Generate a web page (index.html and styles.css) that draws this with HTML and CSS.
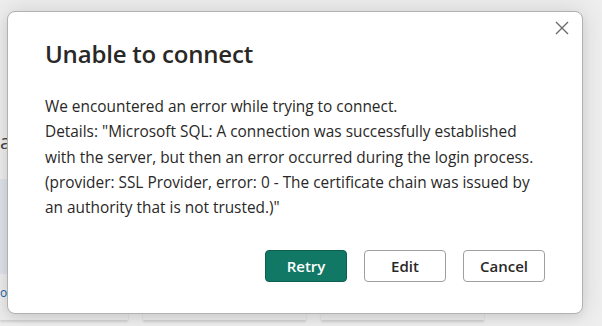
FILE: index.html
```
<!DOCTYPE html>
<html lang="en">
<head>
    <meta charset="UTF-8">
    <meta name="viewport" content="width=device-width, initial-scale=1.0">
    <title>Unable to connect</title>
    <link rel="stylesheet" href="styles.css">
</head>
<body>
<div class="backdrop">
    <div class="page">
        <div class="page-label">a</div>
        <div class="page-panel"></div>
        <div class="page-link">or</div>
        <div class="page-cards">
            <div class="page-card card-a"></div>
            <div class="page-card card-b"></div>
            <div class="page-card card-c"></div>
        </div>
    </div>

    <div class="dialog" role="dialog" aria-labelledby="dialogTitle">
        <button class="close-btn" type="button" aria-label="Close">
            <svg width="14" height="14" viewBox="0 0 14 14">
                <path d="M1 1 L13 13 M13 1 L1 13" stroke="#6b6b6b" stroke-width="1.4" fill="none"/>
            </svg>
        </button>

        <h1 id="dialogTitle">Unable to connect</h1>

        <div class="dialog-body">
            <p>We encountered an error while trying to connect.</p>
            <p>Details: "Microsoft SQL: A connection was successfully established with the server, but then an error occurred during the login process. (provider: SSL Provider, error: 0 - The certificate chain was issued by an authority that is not trusted.)"</p>
        </div>

        <div class="dialog-actions">
            <button type="button" class="btn btn-primary">Retry</button>
            <button type="button" class="btn">Edit</button>
            <button type="button" class="btn">Cancel</button>
        </div>
    </div>
</div>
</body>
</html>
```

FILE: styles.css
```
:root {
    --text-primary: #292827;
    --brand: #117865;
    --overlay: #eeeeee;
    --border: #b3b0ad;
}

* {
    margin: 0;
    padding: 0;
    box-sizing: border-box;
}

body {
    font-family: 'Open Sans', 'Noto Sans', 'Liberation Sans', sans-serif;
    background: var(--overlay);
    color: var(--text-primary);
}

.backdrop {
    position: relative;
    width: 602px;
    height: 326px;
    overflow: hidden;
}

/* page behind the dialog, dimmed */
.page {
    display: flex;
    flex-direction: column;
    height: 100%;
    padding-top: 128px;
}

.page-label {
    font-size: 20px;
    color: #444;
    height: 30px;
}

.page-panel {
    margin-top: 22px;
    width: 120px;
    height: 100px;
    background: #dfe3ea;
}

.page-link {
    margin-top: 10px;
    font-size: 12px;
    color: #1c5fa8;
}

.page-cards {
    display: flex;
    gap: 15px;
    margin-top: auto;
    margin-bottom: 6px;
    height: 20px;
}

.page-card {
    background: #ececec;
    box-shadow: 0 2px 2px rgba(0, 0, 0, 0.12);
}

.card-a { width: 128px; }
.card-b { width: 163px; }
.card-c { width: 163px; }

.dialog {
    position: absolute;
    left: 7px;
    top: 11px;
    width: 576px;
    height: 303px;
    background: #fff;
    border: 1px solid var(--border);
    border-radius: 8px;
    box-shadow: 0 0 24px rgba(0, 0, 0, 0.13), 0 4px 8px rgba(0, 0, 0, 0.06);
    padding: 26px 37px 0 37px;
    display: flex;
    flex-direction: column;
}

.close-btn {
    position: absolute;
    top: 9px;
    right: 13px;
    width: 14px;
    height: 14px;
    border: none;
    background: none;
    display: flex;
}

.dialog h1 {
    font-size: 24px;
    font-weight: 600;
    line-height: 32px;
    letter-spacing: -0.2px;
}

.dialog-body {
    margin-top: 24px;
    width: 490px;
    font-size: 15.4px;
    line-height: 25.3px;
}

.dialog-actions {
    display: flex;
    justify-content: flex-end;
    gap: 17px;
    margin-top: 30px;
}

.btn {
    width: 82px;
    height: 32px;
    border: 1px solid #a19f9d;
    border-radius: 4px;
    background: #fff;
    color: var(--text-primary);
    font-family: inherit;
    font-size: 15px;
    font-weight: 600;
}

.btn-primary {
    background: var(--brand);
    border-color: #0d5e50;
    color: #fff;
}
```
